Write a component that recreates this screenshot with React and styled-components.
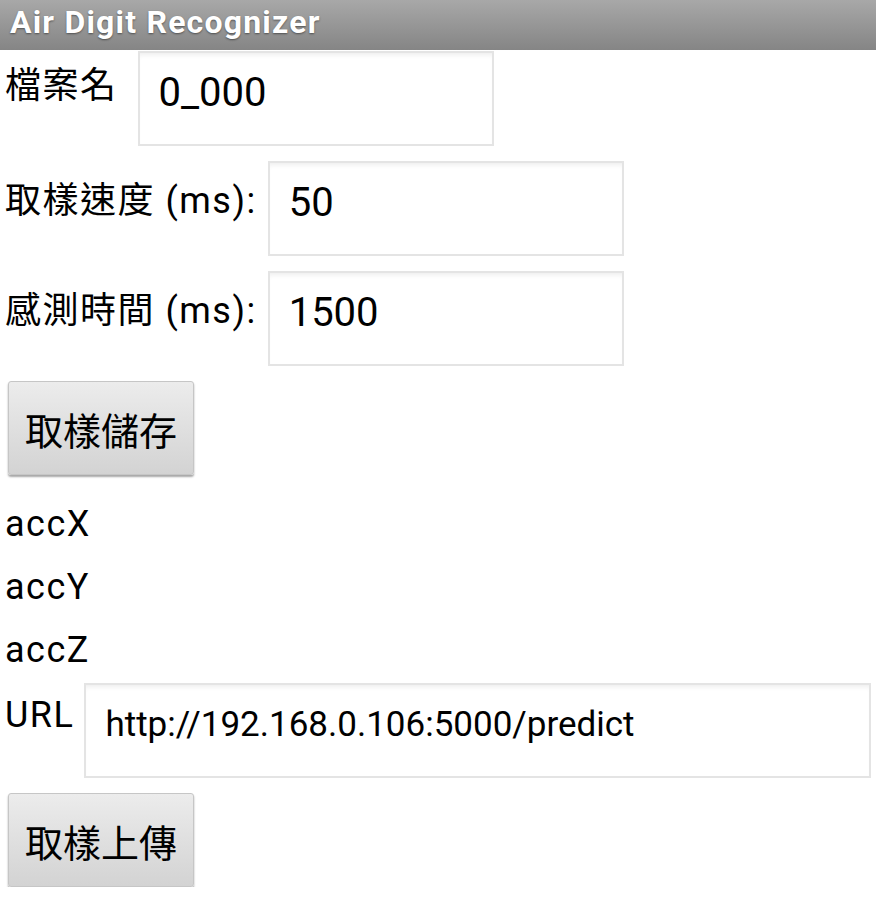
import React from 'react';
import styled, { createGlobalStyle } from 'styled-components';

const GlobalStyle = createGlobalStyle`
    body {
        margin: 0;
        background: #ffffff;
        font-family: Roboto, "Noto Sans CJK TC", sans-serif;
        color: #000;
    }
`;

/* --- Barra de título --- */
const TitleBar = styled.header`
    height: 50px;
    box-sizing: border-box;
    display: flex;
    align-items: center;
    padding: 0 0 6px 10px;
    background: linear-gradient(#a8a8a8, #858585);
    color: #ffffff;
    font-family: Roboto, sans-serif;
    font-weight: 700;
    font-size: 32px;
    letter-spacing: 1.2px;
    text-shadow: 0 1px 2px rgba(0, 0, 0, 0.45);
`;

const Form = styled.main`
    display: flex;
    flex-direction: column;
    align-items: stretch;
    padding: 1px 5px 0 5px;
`;

const Stack = styled.section`
    display: flex;
    flex-direction: column;
    align-items: flex-start;
    gap: 15px;
    margin-top: ${props => props.$top || 0}px;
`;

const FieldRow = styled.div`
    display: flex;
    align-items: flex-start;
    align-self: stretch;
`;

const FieldLabel = styled.label`
    font-family: Roboto, "Noto Sans CJK TC", sans-serif;
    font-size: 36px;
    letter-spacing: 1.5px;
    line-height: 48px;
    padding-top: ${props => props.$drop}px;
    margin-right: ${props => props.$gap}px;
    white-space: nowrap;
`;

const TextBox = styled.input`
    box-sizing: border-box;
    height: 95px;
    width: ${props => (props.$wide ? 'auto' : '356px')};
    flex: ${props => (props.$wide ? '1' : 'none')};
    min-width: 0;
    margin: 0;
    padding: 0 12px 12px 19px;
    border: 2px solid #e4e4e4;
    border-radius: 0;
    background: #ffffff;
    box-shadow: inset 0 5px 5px -3px rgba(0, 0, 0, 0.07);
    font-family: Roboto, sans-serif;
    font-size: ${props => props.$size}px;
    color: #000;
    outline: none;
`;

const PushButton = styled.button`
    width: 186px;
    height: 94px;
    margin-left: 3px;
    padding: 0;
    border: 1px solid #c6c6c6;
    border-radius: 3px;
    background: linear-gradient(#ececec, #d3d3d3);
    box-shadow: 0 2px 2px rgba(0, 0, 0, 0.35);
    font-family: "Noto Sans CJK TC", sans-serif;
    font-size: 38px;
    color: #000;
    cursor: pointer;
`;

const Readouts = styled.div`
    margin: 18px 0 1px;
`;

const Readout = styled.div`
    font-family: Roboto, sans-serif;
    font-size: 36px;
    letter-spacing: 1.5px;
    line-height: 63px;
    height: 63px;
`;

export default function App() {
    return (
        <>
            <GlobalStyle />
            <TitleBar>Air Digit Recognizer</TitleBar>
            <Form>
                <Stack>
                    <FieldRow>
                        <FieldLabel $drop={11} $gap={20}>檔案名</FieldLabel>
                        <TextBox $size={40} defaultValue="0_000" readOnly />
                    </FieldRow>
                    <FieldRow>
                        <FieldLabel $drop={16} $gap={11}>取樣速度 (ms):</FieldLabel>
                        <TextBox $size={40} defaultValue="50" readOnly />
                    </FieldRow>
                    <FieldRow>
                        <FieldLabel $drop={16} $gap={11}>感測時間 (ms):</FieldLabel>
                        <TextBox $size={40} defaultValue="1500" readOnly />
                    </FieldRow>
                    <PushButton>取樣儲存</PushButton>
                </Stack>

                <Readouts>
                    <Readout>accX</Readout>
                    <Readout>accY</Readout>
                    <Readout>accZ</Readout>
                </Readouts>

                <Stack>
                    <FieldRow>
                        <FieldLabel $drop={8} $gap={10}>URL</FieldLabel>
                        <TextBox $wide $size={35} defaultValue="http://192.168.0.106:5000/predict" readOnly />
                    </FieldRow>
                    <PushButton>取樣上傳</PushButton>
                </Stack>
            </Form>
        </>
    );
}
